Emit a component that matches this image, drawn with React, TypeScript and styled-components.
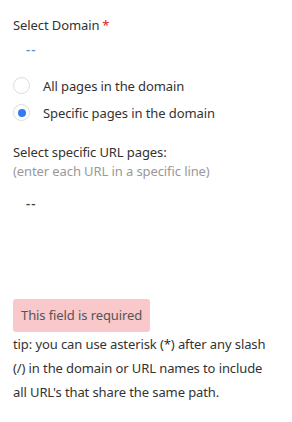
import React from "react";
import styled, { createGlobalStyle } from "styled-components";

const Global = createGlobalStyle`
  body { margin: 0; background: #fff; font-family: "Segoe UI", "Noto Sans", "Open Sans", sans-serif; }
`;

const Page = styled.div`
  padding: 15px 13px;
  font-size: 13px;
  color: #333;
  letter-spacing: -0.1px;
`;

const Label = styled.div`
  line-height: 20px;
  color: #333;
`;

const Star = styled.span`
  color: #e02020;
  margin-left: 3px;
`;

const Placeholder = styled.div<{ $blue?: boolean; $gap: number }>`
  padding-left: 13px;
  margin-top: ${(p) => p.$gap}px;
  line-height: 20px;
  color: ${(p) => (p.$blue ? "#5b8fd6" : "#444")};
  font-weight: 600;
  letter-spacing: 1px;
`;

const RadioGroup = styled.div`
  margin-top: 17px;
  display: flex;
  flex-direction: column;
  gap: 8px;
`;

const RadioRow = styled.label`
  display: flex;
  align-items: center;
  gap: 13px;
  height: 19px;
`;

const Circle = styled.span<{ $checked?: boolean }>`
  width: 17px;
  height: 17px;
  box-sizing: border-box;
  border-radius: 50%;
  border: 1px solid #dcdcdc;
  background: #fff;
  display: flex;
  align-items: center;
  justify-content: center;
  &::after {
    content: "";
    width: 8px;
    height: 8px;
    border-radius: 50%;
    background: ${(p) => (p.$checked ? "#2f7cf6" : "transparent")};
  }
`;

const Section = styled.div`
  margin-top: 20px;
`;

const Hint = styled.div`
  color: #999;
  line-height: 19px;
`;

const Spacer = styled.div`
  height: 86px;
`;

const ErrorBox = styled.div`
  display: inline-block;
  background: #f9c8cb;
  color: #555;
  border-radius: 3px;
  padding: 7px 8px;
  line-height: 19px;
`;

const Tip = styled.div`
  line-height: 24px;
  color: #333;
`;

export default function App() {
  return (
    <>
      <Global />
      <Page>
        <Label>
          Select Domain<Star>*</Star>
        </Label>
        <Placeholder $blue $gap={4}>--</Placeholder>
        <RadioGroup>
          <RadioRow>
            <Circle />
            All pages in the domain
          </RadioRow>
          <RadioRow>
            <Circle $checked />
            Specific pages in the domain
          </RadioRow>
        </RadioGroup>
        <Section>
          <Label>Select specific URL pages:</Label>
          <Hint>(enter each URL in a specific line)</Hint>
          <Placeholder $gap={12}>--</Placeholder>
        </Section>
        <Spacer />
        <ErrorBox>This field is required</ErrorBox>
        <Tip>
          tip: you can use asterisk (*) after any slash (/) in the domain or URL names to include all URL's that share the same path.
        </Tip>
      </Page>
    </>
  );
}
